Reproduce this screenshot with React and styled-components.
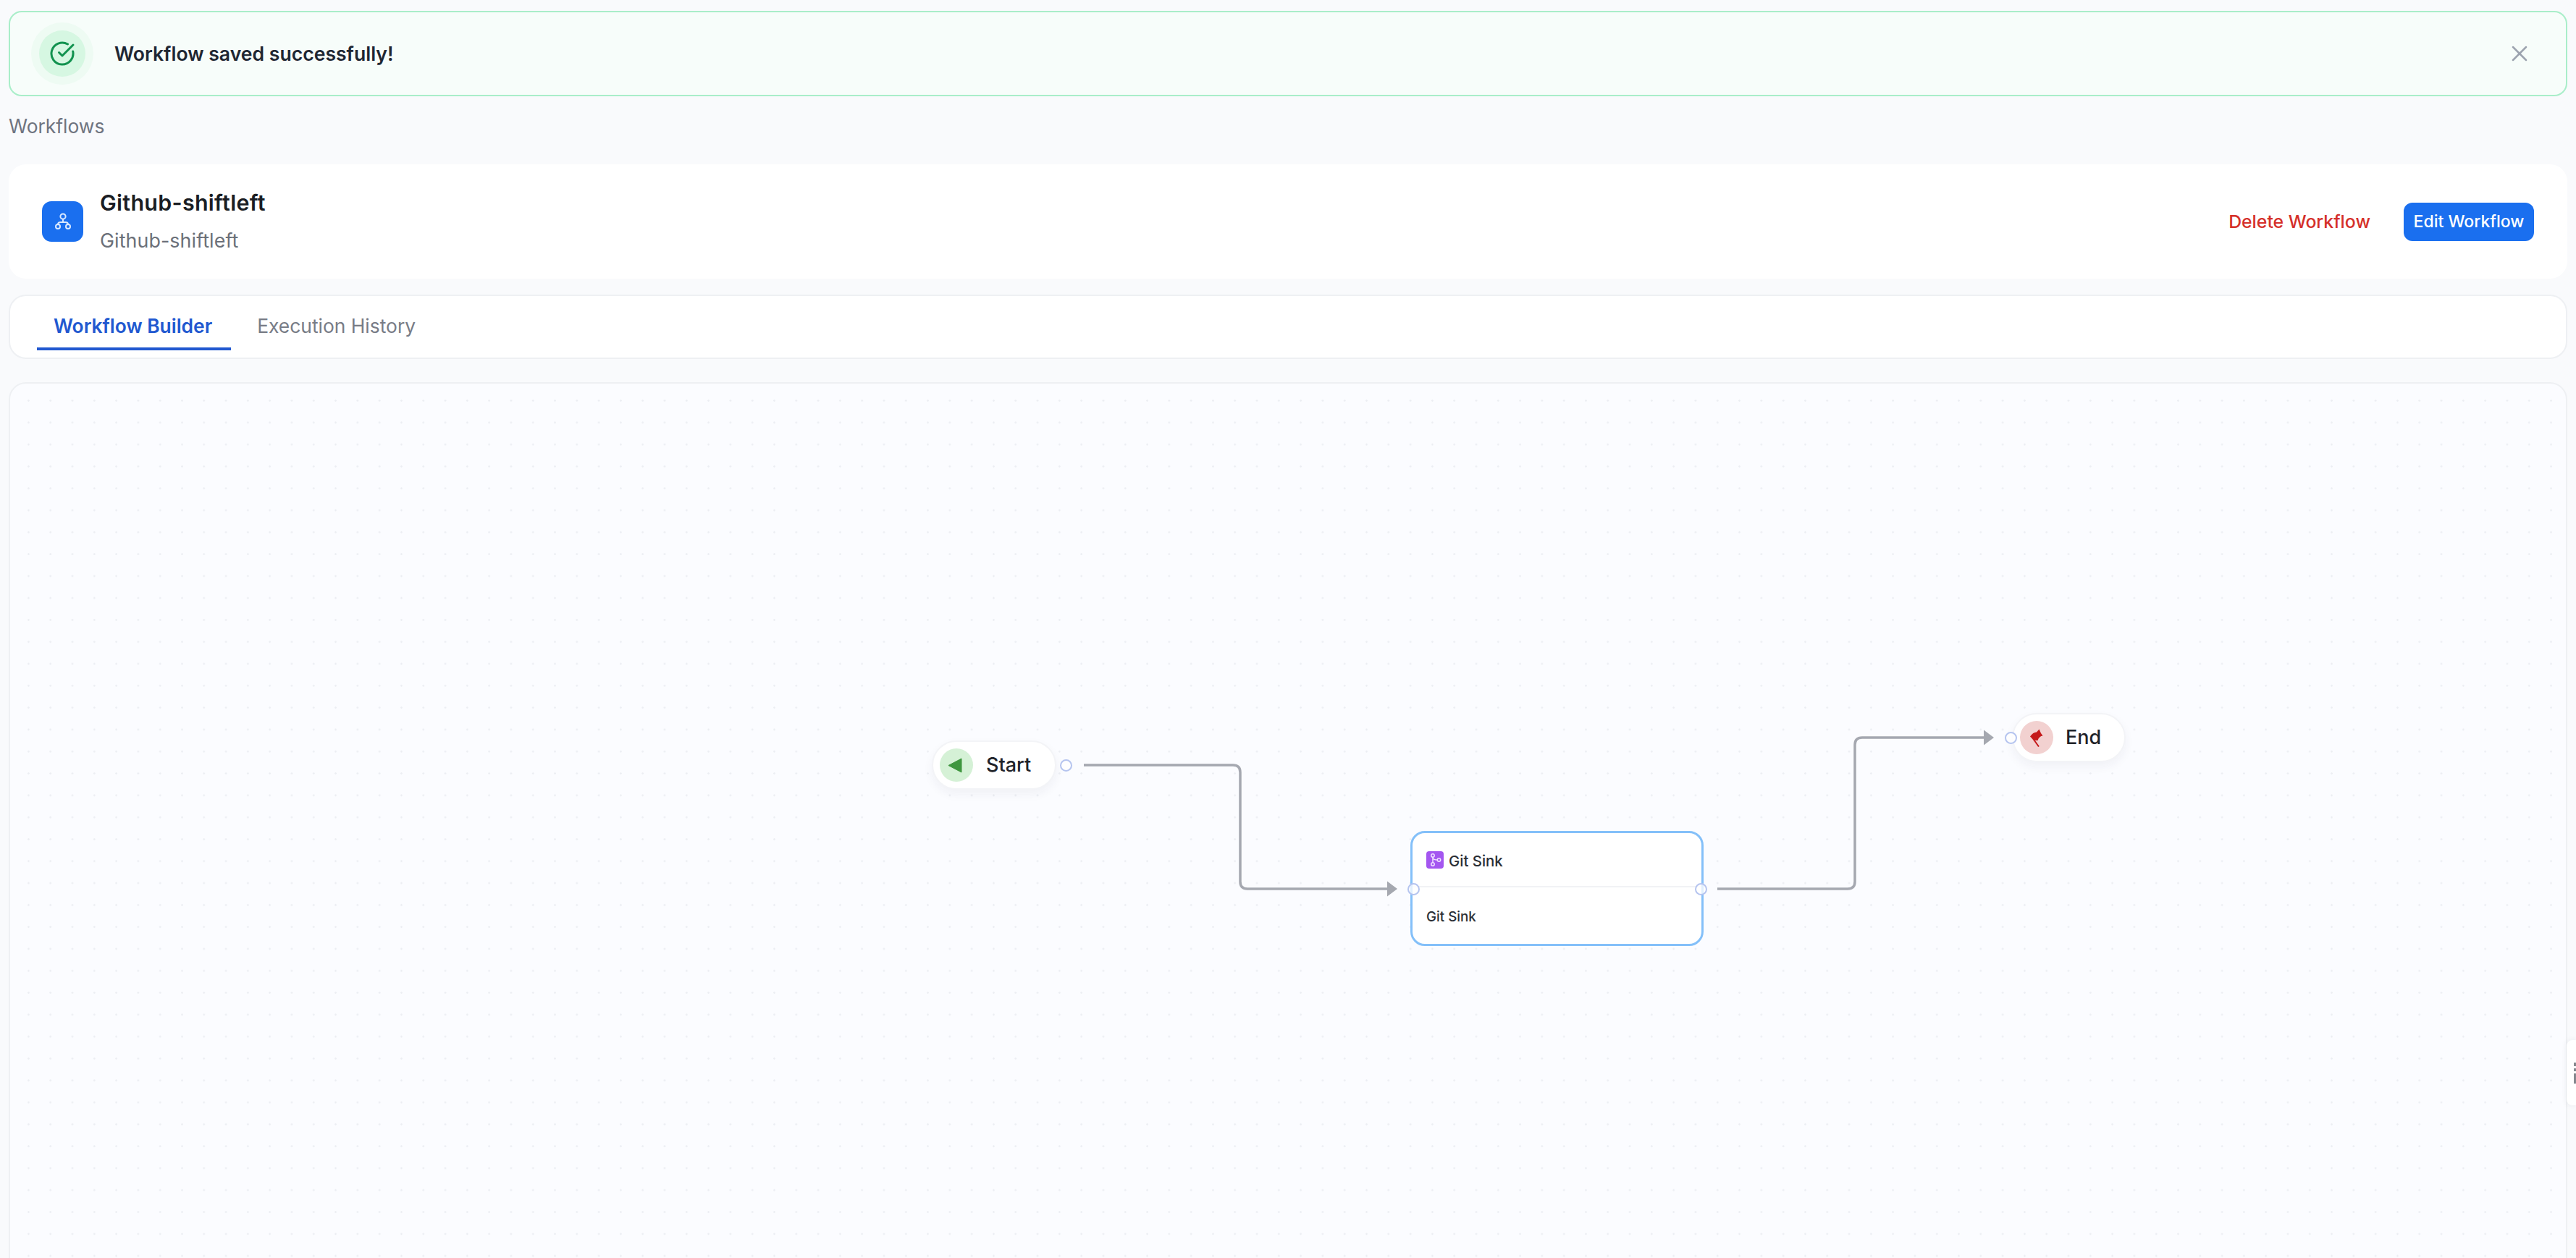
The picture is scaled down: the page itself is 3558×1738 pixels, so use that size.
import React from "react";
import styled, { createGlobalStyle } from "styled-components";
import { CircleCheckBig, X } from "lucide-react";

const GlobalStyle = createGlobalStyle`
    html, body {
        margin: 0;
        padding: 0;
        background: #f9fafc;
    }
    * {
        box-sizing: border-box;
    }
    body {
        font-family: "Inter", "Liberation Sans", sans-serif;
        color: #1f2329;
    }
`;

const Page = styled.div`
    position: relative;
    width: 3558px;
    height: 1738px;
    padding: 15px 12px 0;
    overflow: hidden;
    display: flex;
    flex-direction: column;
`;

const Banner = styled.div`
    height: 118px;
    flex-shrink: 0;
    display: flex;
    align-items: center;
    gap: 40px;
    padding: 0 46px 0 40px;
    background: #f7fdfa;
    border: 2px solid #a9eec9;
    border-radius: 18px;
`;

const BannerIcon = styled.div`
    width: 64px;
    height: 64px;
    border-radius: 50%;
    display: flex;
    align-items: center;
    justify-content: center;
    background: #d6f7e2;
    box-shadow: 0 0 0 11px #eefbf3;
    color: #12924f;
`;

const BannerText = styled.div`
    flex: 1;
    font-size: 26.6px;
    font-weight: 600;
    color: #1f2733;
`;

const CloseIcon = styled(X)`
    color: #9ca3af;
`;

const Crumb = styled.div`
    height: 36px;
    margin: 23px 0 35px;
    font-size: 26.4px;
    line-height: 36px;
    color: #6f7480;
`;

const HeaderCard = styled.div`
    height: 158px;
    flex-shrink: 0;
    display: flex;
    align-items: center;
    justify-content: space-between;
    padding: 0 46px;
    background: #fff;
    border-radius: 24px;
`;

const TitleGroup = styled.div`
    display: flex;
    align-items: center;
    gap: 23px;
`;

const WorkflowIcon = styled.div`
    width: 57px;
    height: 56px;
    border-radius: 13px;
    background: #1a6fef;
    display: flex;
    align-items: center;
    justify-content: center;
`;

const Titles = styled.div`
    display: flex;
    flex-direction: column;
    gap: 12px;
    margin-bottom: 4px;
`;

const Title = styled.div`
    font-size: 30.4px;
    font-weight: 600;
    line-height: 44px;
    letter-spacing: 0.3px;
    color: #1a1d23;
`;

const Subtitle = styled.div`
    font-size: 26.8px;
    line-height: 36px;
    letter-spacing: 0.1px;
    color: #6b7079;
`;

const Actions = styled.div`
    display: flex;
    align-items: center;
    gap: 46px;
`;

const DeleteButton = styled.button`
    padding: 0;
    border: none;
    background: none;
    font-family: inherit;
    font-size: 24.8px;
    font-weight: 500;
    color: #d5302a;
`;

const EditButton = styled.button`
    height: 53px;
    width: 180px;
    padding: 0;
    border: none;
    border-radius: 12px;
    background: #1a6fef;
    font-family: inherit;
    font-size: 23px;
    font-weight: 500;
    white-space: nowrap;
    color: #fff;
`;

const TabCard = styled.div`
    height: 89px;
    flex-shrink: 0;
    margin-top: 22px;
    display: flex;
    gap: 13px;
    padding: 9px 37px 0;
    background: #fff;
    border: 2px solid #eef0f3;
    border-radius: 24px;
`;

const Tab = styled.div`
    height: 66px;
    padding: 2px 26px 0 23px;
    display: flex;
    align-items: center;
    font-size: 26.4px;
    font-weight: ${(p) => (p.$active ? 600 : 400)};
    color: ${(p) => (p.$active ? "#2158d0" : "#787c86")};
    border-bottom: 4px solid ${(p) => (p.$active ? "#2158d0" : "transparent")};
`;

const Canvas = styled.div`
    position: relative;
    width: 3534px;
    height: 1300px;
    flex-shrink: 0;
    margin-top: 32px;
    border: 2px solid #eef0f3;
    border-radius: 24px;
    background-color: #fbfcff;
    background-image: radial-gradient(circle, #eceef3 1.1px, transparent 1.5px);
    background-size: 30.3px 30.3px;
    background-position: 10.25px 8.35px;
`;

const Edges = styled.svg`
    position: absolute;
    top: 0;
    left: 0;
`;

const PillNode = styled.div`
    position: absolute;
    left: ${(p) => p.$x}px;
    top: ${(p) => p.$y}px;
    width: ${(p) => p.$w}px;
    height: 68px;
    padding-left: 9px;
    display: flex;
    align-items: center;
    gap: ${(p) => p.$gap}px;
    background: #fff;
    border: 2px solid #f3f4f7;
    border-radius: 34px;
    box-shadow: 0 6px 14px rgba(30, 40, 70, 0.05);
    font-size: 27px;
    font-weight: 500;
    color: #1f2329;
`;

const NodeIcon = styled.div`
    width: 46px;
    height: 46px;
    border-radius: 50%;
    flex-shrink: 0;
    background: ${(p) => p.$bg};
`;

const NodeLabel = styled.span`
    margin-top: -2px;
`;

const Handle = styled.div`
    position: absolute;
    top: ${(p) => p.$y}px;
    left: ${(p) => p.$x}px;
    width: 17px;
    height: 17px;
    border-radius: 50%;
    border: 2px solid #b5c4ef;
    background: rgba(255, 255, 255, 0.75);
`;

const SinkNode = styled.div`
    position: absolute;
    left: ${(p) => p.$x}px;
    top: ${(p) => p.$y}px;
    width: 405px;
    height: 159px;
    background: #fff;
    border: 3px solid #84c0f9;
    border-radius: 20px;
`;

const SinkHead = styled.div`
    height: 75px;
    padding: 3px 0 0 19px;
    display: flex;
    align-items: center;
    gap: 7px;
    border-bottom: 2px solid #f1f2f5;
    font-size: 20.4px;
    font-weight: 500;
    color: #2a2e35;
`;

const SinkIcon = styled.div`
    width: 24px;
    height: 24px;
    margin-top: -2px;
    border-radius: 4px;
    background: #a456f0;
    display: flex;
    align-items: center;
    justify-content: center;
`;

const SinkBody = styled.div`
    padding: 29px 0 0 19px;
    font-size: 18.8px;
    font-weight: 500;
    line-height: 24px;
    color: #2a2e35;
`;

const SideTab = styled.div`
    position: absolute;
    top: 1437px;
    right: 0;
    width: 13px;
    height: 90px;
    padding: 31px 0 0 10px;
    background: #fff;
    border-radius: 8px 0 0 8px;
    box-shadow: 0 0 8px rgba(30, 40, 70, 0.08);
`;

export default function App() {
    return (
        <Page>
            <GlobalStyle />
            <Banner>
                <BannerIcon>
                    <CircleCheckBig size={36} strokeWidth={2} />
                </BannerIcon>
                <BannerText>Workflow saved successfully!</BannerText>
                <CloseIcon size={36} strokeWidth={1.7} />
            </Banner>
            <Crumb>Workflows</Crumb>
            <HeaderCard>
                <TitleGroup>
                    <WorkflowIcon>
                        <svg width="24" height="26" viewBox="0 0 24 26" fill="none" stroke="#d8e8ff" strokeWidth="2">
                            <circle cx="12" cy="6" r="3.6" />
                            <circle cx="5" cy="20" r="3" />
                            <circle cx="19" cy="20" r="3" />
                            <path d="M12 9.6V14M5 17c0-2 1.5-3 3.5-3h7c2 0 3.5 1 3.5 3" />
                        </svg>
                    </WorkflowIcon>
                    <Titles>
                        <Title>Github-shiftleft</Title>
                        <Subtitle>Github-shiftleft</Subtitle>
                    </Titles>
                </TitleGroup>
                <Actions>
                    <DeleteButton>Delete Workflow</DeleteButton>
                    <EditButton>Edit Workflow</EditButton>
                </Actions>
            </HeaderCard>
            <TabCard>
                <Tab $active>Workflow Builder</Tab>
                <Tab>Execution History</Tab>
            </TabCard>
            <Canvas>
                <Edges width="3530" height="1298" viewBox="14 530 3530 1298" fill="none">
                    <path d="M1497 1057H1703Q1713 1057 1713 1067V1218Q1713 1228 1723 1228H1918" stroke="#a5a8b0" strokeWidth="3.5" />
                    <polygon points="1916,1217.5 1930,1228 1916,1238.5" fill="#a5a8b0" />
                    <path d="M2372 1228H2552Q2562 1228 2562 1218V1029Q2562 1019 2572 1019H2742" stroke="#a5a8b0" strokeWidth="3.5" />
                    <polygon points="2740,1008.5 2754,1019 2740,1029.5" fill="#a5a8b0" />
                </Edges>
                <PillNode $x={1273} $y={493} $w={172} $gap={18}>
                    <NodeIcon $bg="#d5f1d6">
                        <svg width="46" height="46" viewBox="0 0 46 46">
                            <path d="M12 23.5L30 14V33Z" fill="#3f963f" stroke="#3f963f" strokeLinejoin="round" />
                        </svg>
                    </NodeIcon>
                    <NodeLabel>Start</NodeLabel>
                    <Handle $x={175} $y={24} />
                </PillNode>
                <SinkNode $x={1934} $y={618}>
                    <SinkHead>
                        <SinkIcon>
                            <svg width="24" height="24" viewBox="0 0 24 24" fill="none" stroke="#f0e2ff" strokeWidth="1.5">
                                <circle cx="9" cy="6" r="2.2" />
                                <circle cx="9" cy="18" r="2.2" />
                                <circle cx="17.5" cy="12" r="2.2" />
                                <path d="M9 8.2V15.8M9 9c.4 2.5 2.6 3 6.3 3" />
                            </svg>
                        </SinkIcon>
                        Git Sink
                    </SinkHead>
                    <SinkBody>Git Sink</SinkBody>
                    <Handle $x={-7.5} $y={68.5} />
                    <Handle $x={389.5} $y={68.5} />
                </SinkNode>
                <PillNode $x={2765} $y={455} $w={157} $gap={17}>
                    <NodeIcon $bg="#f2d1d0">
                        <svg width="46" height="46" viewBox="0 0 46 46">
                            <path d="M14 21.5Q18 15.5 23 15.5L26.5 11.5Q28.5 17 31.5 20.5Q26.5 21 24.5 27Q19 27.5 14 21.5Z" fill="#c5191a" />
                            <path d="M17 23L26 35.5" stroke="#c5191a" strokeWidth="2" />
                        </svg>
                    </NodeIcon>
                    <NodeLabel>End</NodeLabel>
                    <Handle $x={-12} $y={24} />
                </PillNode>
            </Canvas>
            <SideTab>
                <svg width="3" height="29" viewBox="0 0 3 29" fill="#85888f">
                    <rect y="0" width="3" height="5" />
                    <rect y="8" width="3" height="4" />
                    <rect y="15" width="3" height="14" />
                </svg>
            </SideTab>
        </Page>
    );
}
